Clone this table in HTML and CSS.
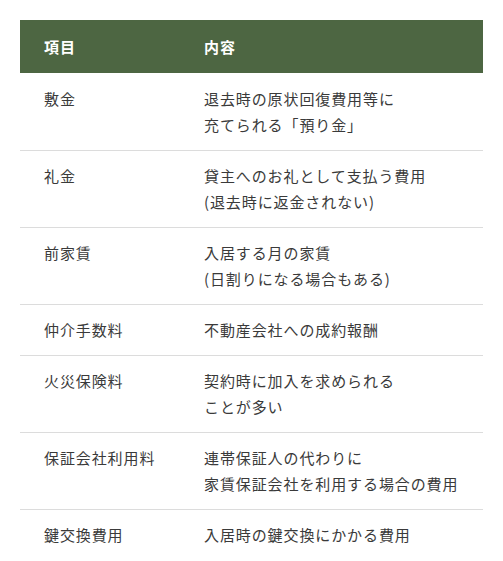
FILE: index.html
```html
<!DOCTYPE html>
<html lang="ja">
<head>
<meta charset="utf-8">
<link rel="stylesheet" href="styles.css">
</head>
<body>
<div class="wrap">
<table class="cost-table">
  <thead>
    <tr><th class="c1">項目</th><th class="c2">内容</th></tr>
  </thead>
  <tbody>
    <tr><td class="c1">敷金</td><td class="c2">退去時の原状回復費用等に<br>充てられる「預り金」</td></tr>
    <tr><td class="c1">礼金</td><td class="c2">貸主へのお礼として支払う費用<br>(退去時に返金されない)</td></tr>
    <tr><td class="c1">前家賃</td><td class="c2">入居する月の家賃<br>(日割りになる場合もある)</td></tr>
    <tr><td class="c1">仲介手数料</td><td class="c2">不動産会社への成約報酬</td></tr>
    <tr><td class="c1">火災保険料</td><td class="c2">契約時に加入を求められる<br>ことが多い</td></tr>
    <tr><td class="c1">保証会社利用料</td><td class="c2">連帯保証人の代わりに<br>家賃保証会社を利用する場合の費用</td></tr>
    <tr><td class="c1">鍵交換費用</td><td class="c2">入居時の鍵交換にかかる費用</td></tr>
  </tbody>
</table>
</div>
</body>
</html>
```
FILE: styles.css
```css
html, body {
  margin: 0;
  padding: 0;
  background: #ffffff;
}
.wrap {
  padding: 20px 20px 0 20px;
}
.cost-table {
  width: 463px;
  border-collapse: collapse;
  font-family: "Noto Sans CJK JP", "Noto Sans", sans-serif;
  font-size: 15px;
  letter-spacing: 0.9px;
  color: #3a3a3a;
}
.cost-table th {
  background: #4d6642;
  color: #ffffff;
  font-weight: bold;
  text-align: left;
  line-height: 27px;
  padding: 13px 0 13px 24px;
}
.cost-table td {
  text-align: left;
  vertical-align: top;
  line-height: 26px;
  padding: 12px 0 12px 24px;
  border-bottom: 1px solid #dcdcdc;
}
.cost-table tbody tr:first-child td {
  padding-top: 13px;
}
.cost-table tbody tr:last-child td {
  border-bottom: none;
}
.cost-table .c1 {
  width: 136px;
}
```
